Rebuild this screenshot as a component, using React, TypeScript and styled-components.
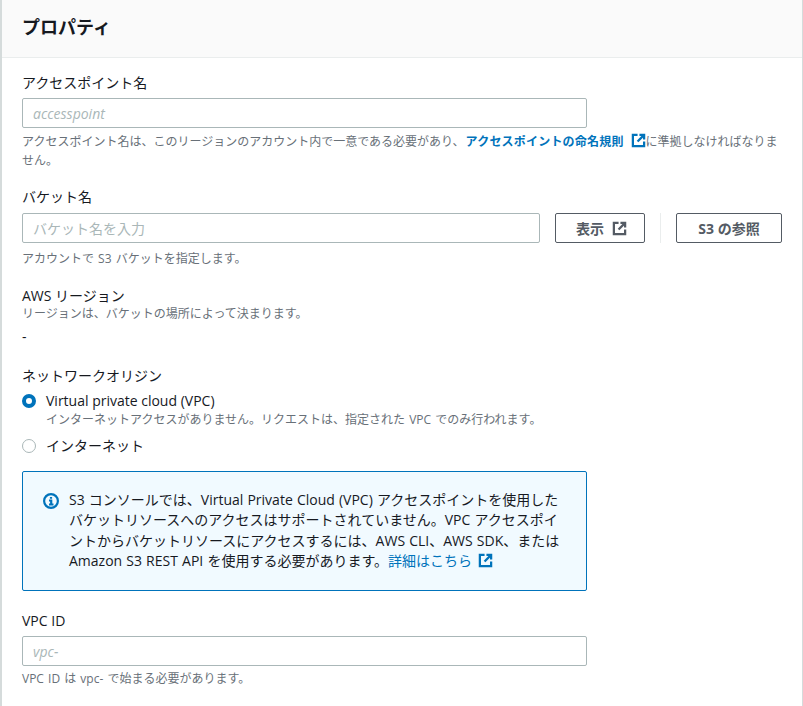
import React from "react";
import styled, { createGlobalStyle } from "styled-components";

const Global = createGlobalStyle`
  html, body { margin: 0; padding: 0; background: #fff; }
  body { font-family: "Open Sans", "Noto Sans CJK JP", sans-serif; color: #16191f; }
  * { box-sizing: border-box; }
`;

const Panel = styled.section`
  width: 803px;
  height: 706px;
  overflow: hidden;
  border-left: 2px solid #d5dbdb;
  border-right: 1px solid #d5dbdb;
`;
const Header = styled.header`
  height: 58px;
  background: #fafafa;
  border-bottom: 1px solid #eaeded;
  padding: 15px 0 0 20px;
`;
const Title = styled.h2`
  margin: 0;
  font-size: 18px;
  line-height: 24px;
  font-weight: 700;
`;
const Body = styled.div`
  display: flex;
  flex-direction: column;
  padding: 15px 20px 0;
`;
const Field = styled.div<{ $mt?: number }>`
  margin-top: ${(p) => p.$mt ?? 0}px;
`;
const Label = styled.div`
  font-size: 14px;
  line-height: 20px;
`;
const Input = styled.input<{ $w?: number; $italic?: boolean }>`
  display: block;
  width: ${(p) => p.$w ?? 565}px;
  height: 30px;
  margin: 5px 0 0;
  padding: 0 10px;
  border: 1px solid #aab7b8;
  border-radius: 2px;
  background: #fff;
  font-family: inherit;
  font-size: 14px;
  outline: none;
  font-style: ${(p) => (p.$italic ? "italic" : "normal")};
  &::placeholder { color: #aab7b8; opacity: 1; }
`;
const Desc = styled.div`
  font-size: 12px;
  line-height: 19px;
  color: #687078;
  word-spacing: 1px;
`;
const HelpBelow = styled(Desc)<{ $mt: number }>`
  margin-top: ${(p) => p.$mt}px;
`;
const Link = styled.a`
  margin-left: 1px;
  color: #0073bb;
  font-weight: 700;
  letter-spacing: 0.2px;
  text-decoration: none;
`;
const PlainLink = styled.a`
  color: #0073bb;
  text-decoration: none;
`;
const Row = styled.div`
  display: flex;
  align-items: center;
  margin-top: 6px;
`;
const Button = styled.button<{ $w: number; $pl?: number }>`
  width: ${(p) => p.$w}px;
  height: 30px;
  display: inline-flex;
  align-items: center;
  justify-content: center;
  gap: 8px;
  background: #fff;
  border: 1px solid #545b64;
  border-radius: 2px;
  color: #545b64;
  font-family: inherit;
  font-size: 14px;
  font-weight: 700;
  padding: 0 0 0 ${(p) => p.$pl ?? 0}px;
`;
const RowInput = styled(Input)`
  margin: 0 15px 0 0;
`;
const Divider = styled.div`
  width: 1px;
  height: 30px;
  background: #eaeded;
  margin: 0 15px;
`;
const Dash = styled.div`
  margin-top: 5px;
  font-size: 14px;
  line-height: 20px;
`;
const Radios = styled.div`
  margin-top: 5px;
`;
const RadioRow = styled.div<{ $mt?: number }>`
  display: flex;
  gap: 10px;
  margin-top: ${(p) => p.$mt ?? 0}px;
`;
const RadioCircle = styled.span<{ $on?: boolean }>`
  flex: none;
  width: 14px;
  height: 14px;
  margin-top: 3px;
  border-radius: 50%;
  background: #fff;
  border: ${(p) => (p.$on ? "4px solid #0073bb" : "1px solid #aab7b8")};
`;
const RadioText = styled.div`
  font-size: 14px;
  line-height: 20px;
`;
const RadioDesc = styled(Desc)`
  line-height: 16px;
`;
const RadioSub = styled(RadioDesc)`
  margin-top: 1px;
`;
const Alert = styled.div`
  width: 565px;
  height: 120px;
  margin-top: 15px;
  padding: 18px 20px;
  display: flex;
  gap: 5px;
  background: #f1faff;
  border: 1px solid #0073bb;
  border-radius: 2px;
  font-size: 14px;
  line-height: 20.3px;
  word-spacing: 0.5px;
`;
const AlertIcon = styled.svg`
  flex: none;
  width: 16px;
  height: 16px;
  margin-top: 3px;
  margin-right: 5px;
`;
const ExtIcon = styled.svg<{ $size?: number; $ml?: number }>`
  display: inline-block;
  width: ${(p) => p.$size ?? 14}px;
  height: ${(p) => p.$size ?? 14}px;
  margin-left: ${(p) => p.$ml ?? 0}px;
  vertical-align: -2px;
`;

const External = ({ size, ml }: { size?: number; ml?: number }) => (
  <ExtIcon $size={size} $ml={ml} viewBox="0 0 16 16" fill="none" stroke="currentColor" strokeWidth="2.4">
    <path d="M7 2H2v12h12V9" />
    <path d="M9 2h5v5" />
    <path d="M14 2 7 9" />
  </ExtIcon>
);

export default function App() {
  return (
    <>
      <Global />
      <Panel>
        <Header>
          <Title>プロパティ</Title>
        </Header>
        <Body>
          <Field>
            <Label>アクセスポイント名</Label>
            <Input $italic placeholder="accesspoint" />
            <HelpBelow $mt={4}>
              アクセスポイント名は、このリージョンのアカウント内で一意である必要があり、
              <Link href="#">
                アクセスポイントの命名規則
                <External size={15} ml={7} />
              </Link>
              に準拠しなければなりま
              <br />
              せん。
            </HelpBelow>
          </Field>
          <Field $mt={17}>
            <Label>バケット名</Label>
            <Row>
              <RowInput $w={518} placeholder="バケット名を入力" />
              <Button $w={90} $pl={3}>
                表示
                <External size={15} />
              </Button>
              <Divider />
              <Button $w={106}>S3 の参照</Button>
            </Row>
            <HelpBelow $mt={6}>アカウントで S3 バケットを指定します。</HelpBelow>
          </Field>
          <Field $mt={18}>
            <Label>AWS リージョン</Label>
            <RadioDesc>リージョンは、バケットの場所によって決まります。</RadioDesc>
            <Dash>-</Dash>
          </Field>
          <Field $mt={19}>
            <Label>ネットワークオリジン</Label>
            <Radios>
              <RadioRow>
                <RadioCircle $on />
                <div>
                  <RadioText>Virtual private cloud (VPC)</RadioText>
                  <RadioSub>インターネットアクセスがありません。リクエストは、指定された VPC でのみ行われます。</RadioSub>
                </div>
              </RadioRow>
              <RadioRow $mt={8}>
                <RadioCircle />
                <RadioText>インターネット</RadioText>
              </RadioRow>
            </Radios>
            <Alert>
              <AlertIcon viewBox="0 0 16 16" fill="none" stroke="#0073bb" strokeWidth="2.2">
                <circle cx="8" cy="8" r="6.9" />
                <path d="M6 7.5h2.2v4M6 11.5h4.5M8 4v1.8" />
              </AlertIcon>
              <div>
                S3 コンソールでは、Virtual Private Cloud (VPC) アクセスポイントを使用した
                <br />
                バケットリソースへのアクセスはサポートされていません。VPC アクセスポイ
                <br />
                ントからバケットリソースにアクセスするには、AWS CLI、AWS SDK、または
                <br />
                Amazon S3 REST API を使用する必要があります。
                <PlainLink href="#">
                  詳細はこちら
                  <External size={15} ml={6} />
                </PlainLink>
              </div>
            </Alert>
          </Field>
          <Field $mt={20}>
            <Label>VPC ID</Label>
            <Input $italic placeholder="vpc-" />
            <HelpBelow $mt={3}>VPC ID は vpc- で始まる必要があります。</HelpBelow>
          </Field>
        </Body>
      </Panel>
    </>
  );
}
